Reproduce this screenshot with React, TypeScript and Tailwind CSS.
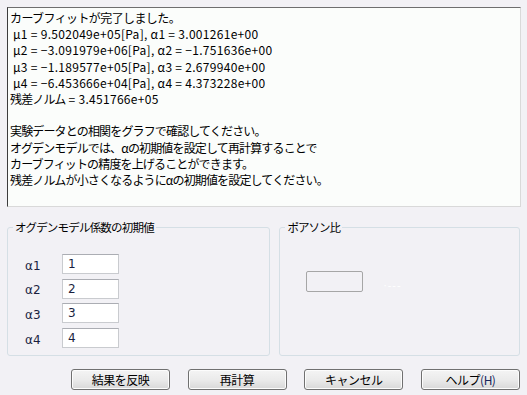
import React from "react";

const jp = { fontFamily: '"Noto Sans CJK JP", "Noto Sans", sans-serif' };
const tah = { fontFamily: '"DejaVu Sans", "Liberation Sans", sans-serif' };

const J = "tracking-[-0.85px]";
const L = "tracking-[0.3px]";

const lines: [string, string][][] = [
  [["カーブフィットが完了しました。", "tracking-[-0.6px]"]],
  [[" μ1 = 9.502049e+05[Pa], α1 = 3.001261e+00", L]],
  [[" μ2 = −3.091979e+06[Pa], α2 = −1.751636e+00", L]],
  [[" μ3 = −1.189577e+05[Pa], α3 = 2.679940e+00", L]],
  [[" μ4 = −6.453666e+04[Pa], α4 = 4.373228e+00", L]],
  [
    ["残差ノルム", J],
    [" = 3.451766e+05", L],
  ],
  [["\u00a0", J]],
  [["実験データとの相関をグラフで確認してください。", J]],
  [["オグデンモデルでは、αの初期値を設定して再計算することで", J]],
  [["カーブフィットの精度を上げることができます。", J]],
  [["残差ノルムが小さくなるようにαの初期値を設定してください。", J]],
];

function Btn({ children }: { children: React.ReactNode }) {
  return (
    <div
      className="w-[99px] h-[21px] rounded-[3px] border border-[#707070] bg-gradient-to-b from-[#f4f4f4] via-[#ebebeb] to-[#d8d8d8] flex items-center justify-center text-[12px] tracking-[-0.5px] text-black shadow-[inset_0_0_0_1px_#fcfcfc]"
      style={jp}
    >
      {children}
    </div>
  );
}

export default function App() {
  return (
    <div className="w-[527px] h-[395px] bg-[#f2f1f5] overflow-hidden flex flex-col pt-[7px]">
      <div
        className="mx-[7px] h-[200px] w-[514px] bg-[#fbfdfb] border-l border-t border-l-[#3c3c3c] border-t-[#6e6e6e] border-r border-b border-r-[#d9d9d9] border-b-[#d9d9d9] pl-[2px] pt-[2px] text-[12px] text-black"
        style={jp}
      >
        {lines.map((segs, i) => (
          <div key={i} className="whitespace-pre h-[16.2px] leading-[16px]">
            {segs.map(([t, c], j) => (
              <span key={j} className={c}>
                {t}
              </span>
            ))}
          </div>
        ))}
      </div>

      <div className="flex mt-[20px] px-[7px] gap-[9px]">
        <div className="relative w-[264px] h-[129px] rounded-[3px] border border-[#d5dfe5]">
          <span
            className="absolute left-[5px] top-[-9px] bg-[#f2f1f5] px-[2px] text-[11.5px] tracking-[-0.8px] leading-[16px] text-black"
            style={jp}
          >
            オグデンモデル係数の初期値
          </span>
          <div className="flex flex-col gap-[4.7px] pt-[26px] pl-[17px]">
            {["1", "2", "3", "4"].map((n) => (
              <div key={n} className="flex items-center h-[20px]">
                <span className="w-[37px] text-[12px] text-[#1a1f3f] pt-[3px]" style={tah}>
                  α{n}
                </span>
                <div
                  className="w-[57px] h-[20px] bg-white border border-[#c9cbcf] border-t-[#abadb3] flex items-center pl-[5px] text-[12px] text-[#1a1f3f]"
                  style={tah}
                >
                  {n}
                </div>
              </div>
            ))}
          </div>
        </div>

        <div className="relative w-[241px] h-[129px] rounded-[3px] border border-[#d5dfe5]">
          <span
            className="absolute left-[5px] top-[-9px] bg-[#f2f1f5] px-[2px] text-[11.5px] tracking-[-1px] leading-[16px] text-black"
            style={jp}
          >
            ポアソン比
          </span>
          <div className="flex items-center pt-[42px] pl-[26px]">
            <div className="w-[57px] h-[21px] rounded-[2px] border border-[#a6a6a6] bg-[#f2f1f5]" />
            <span className="ml-[20px] text-[10px] text-white tracking-[1px] pt-[8px]" style={tah}>
              ·---
            </span>
          </div>
        </div>
      </div>

      <div className="flex justify-end pr-[7px] gap-[17.7px] mt-[13px]">
        <Btn>結果を反映</Btn>
        <Btn>再計算</Btn>
        <Btn>キャンセル</Btn>
        <Btn>
          ヘルプ<span className="text-[#17265a]">(H)</span>
        </Btn>
      </div>
    </div>
  );
}
